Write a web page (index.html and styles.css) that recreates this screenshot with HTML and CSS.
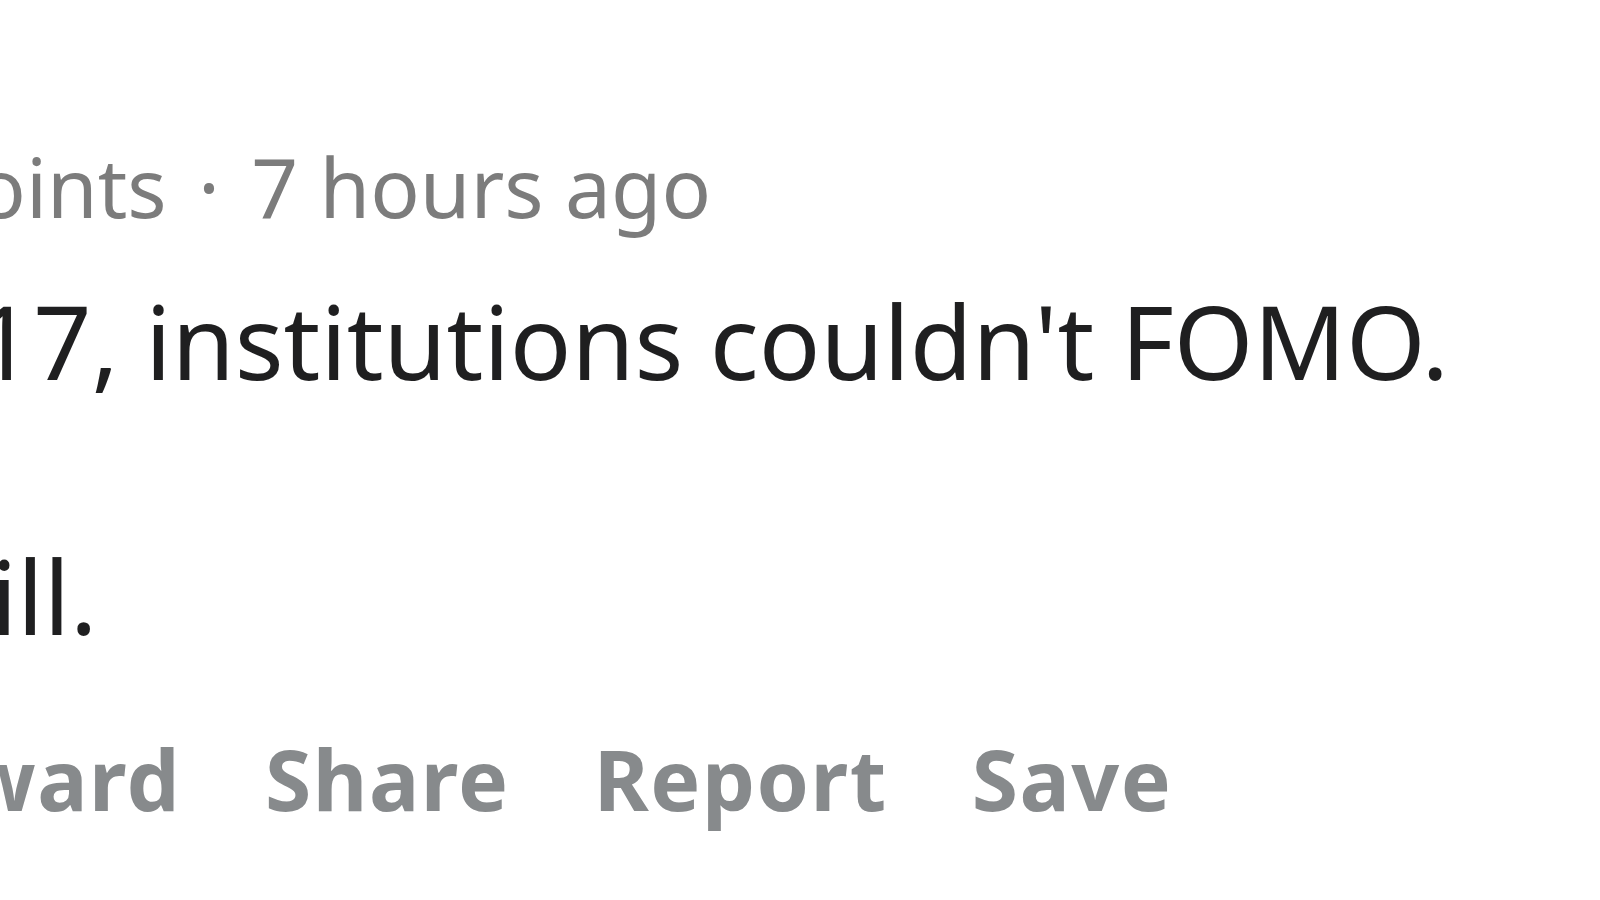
FILE: index.html
```html
<!DOCTYPE html>
<html lang="en">
<head>
    <meta charset="UTF-8">
    <meta name="viewport" content="width=device-width, initial-scale=1.0">
    <title>Comment</title>
    <link rel="stylesheet" href="styles.css">
</head>
<body>

<div class="viewport">
    <div class="comment">
        <div class="comment-meta">
            <span class="score">2.5k points</span>
            <span class="sep">·</span>
            <span class="time">7 hours ago</span>
        </div>

        <div class="comment-body">
            <p>In 2017, institutions couldn't FOMO.</p>
            <p>We will.</p>
        </div>

        <!-- Кнопки под комментарием -->
        <div class="comment-actions">
            <span class="action">Reply</span>
            <span class="action">Give Award</span>
            <span class="action">Share</span>
            <span class="action">Report</span>
            <span class="action">Save</span>
        </div>
    </div>
</div>

</body>
</html>
```

FILE: styles.css
```css
html, body {
    margin: 0;
    padding: 0;
    background-color: #fff;
}

body {
    font-family: 'Noto Sans', 'Liberation Sans', sans-serif;
    overflow: hidden;
}

.viewport {
    width: 1600px;
    height: 900px;
    overflow: hidden;
    padding-top: 125px;
    box-sizing: border-box;
}

.comment {
    margin-left: -266px;
    white-space: nowrap;
}

.comment-meta {
    margin-left: 11px;
    font-size: 82px;
    line-height: 123px;
    color: #7c7c7c;
}

.comment-meta .sep {
    margin: 0 10px;
}

.comment-body {
    margin-top: 16px;
    font-size: 102px;
    line-height: 153px;
    color: #1f1f20;
}

.comment-body p {
    margin: 0 0 102px;
}

.comment-body p:last-child {
    margin-bottom: 0;
}

.comment-actions {
    display: flex;
    gap: 84px;
    margin-top: 45px;
    margin-left: -366px;
    font-size: 84px;
    line-height: 124px;
    letter-spacing: 1.5px;
    font-weight: bold;
    color: #878a8c;
}
```
